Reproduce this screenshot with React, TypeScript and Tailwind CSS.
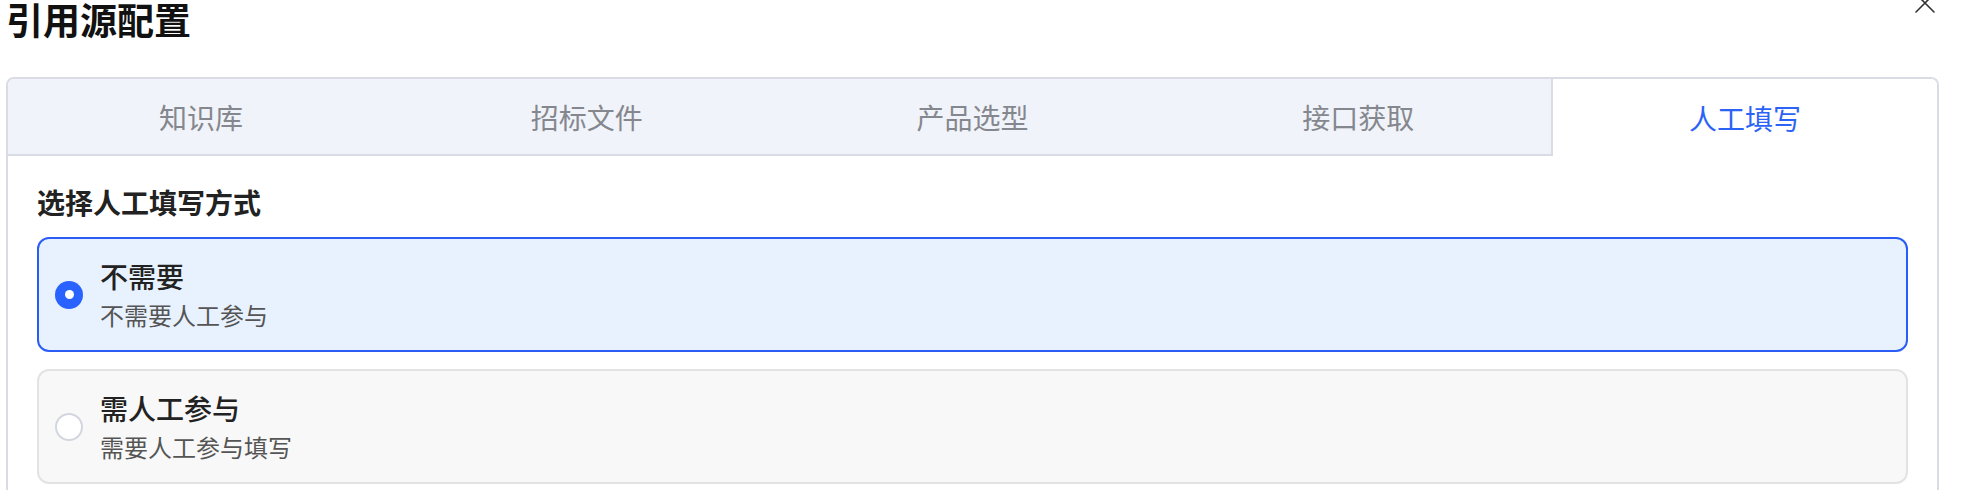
import { useState } from "react";

const tabs = ["知识库", "招标文件", "产品选型", "接口获取", "人工填写"];

const options = [
  { value: "none", title: "不需要", desc: "不需要人工参与" },
  { value: "manual", title: "需人工参与", desc: "需要人工参与填写" },
];

const CloseIcon = () => (
  <svg width="20" height="20" viewBox="0 0 20 20" className="-mt-[7px] mr-[27px] shrink-0">
    <path d="M1 1L19 19M19 1L1 19" stroke="#333" strokeWidth="1.6" strokeLinecap="round" />
  </svg>
);

const App = () => {
  const [activeTab, setActiveTab] = useState(4);
  const [mode, setMode] = useState("none");

  return (
    <div className="w-[1962px] h-[490px] overflow-hidden bg-white font-['Noto_Sans_CJK_SC',sans-serif]">
      <div className="flex items-start justify-between h-[77px]">
        <h1 className="pl-[6px] text-[37px] leading-[38px] font-bold text-[#111]">引用源配置</h1>
        <CloseIcon />
      </div>

      <div className="ml-[6px] w-[1933px] h-[500px] rounded-t-[8px] border-2 border-b-0 border-[#d9dce4] overflow-hidden">
        <div className="grid grid-cols-5 h-[77px]">
          {tabs.map((tab, i) => (
            <button
              key={tab}
              type="button"
              onClick={() => setActiveTab(i)}
              className={
                i === activeTab
                  ? "flex items-center justify-center bg-white border-l-2 border-[#d9dce4] text-[28px] text-[#2b63f6]"
                  : "flex items-center justify-center bg-[#f0f3f9] border-b-2 border-[#d9dce4] text-[28px] text-[#85878e]"
              }
            >
              {tab}
            </button>
          ))}
        </div>

        <div className="px-[29px] pt-[28px]">
          <div className="text-[28px] leading-[36px] font-semibold text-[#222] mb-[17px]">选择人工填写方式</div>
          <div className="flex flex-col gap-[17px]">
            {options.map((opt) => {
              const selected = mode === opt.value;
              return (
                <div
                  key={opt.value}
                  onClick={() => setMode(opt.value)}
                  className={
                    selected
                      ? "flex items-center gap-[17px] h-[115px] pl-[16px] rounded-[12px] border-2 border-[#2a5cf6] bg-[#e8f2fe] cursor-pointer"
                      : "flex items-center gap-[17px] h-[115px] pl-[16px] rounded-[12px] border-2 border-[#e3e3e3] bg-[#f8f8f8] cursor-pointer"
                  }
                >
                  {selected ? (
                    <span className="w-[28px] h-[28px] rounded-full bg-[#2962ff] flex items-center justify-center">
                      <span className="w-[9px] h-[9px] rounded-full bg-white" />
                    </span>
                  ) : (
                    <span className="w-[28px] h-[28px] rounded-full bg-white border-2 border-[#d3d6df]" />
                  )}
                  <div className="flex flex-col gap-[5px]">
                    <span className="text-[28px] leading-[36px] font-medium text-[#222]">{opt.title}</span>
                    <span className="text-[24px] leading-[32px] text-[#555]">{opt.desc}</span>
                  </div>
                </div>
              );
            })}
          </div>
        </div>
      </div>
    </div>
  );
};

export default App;
